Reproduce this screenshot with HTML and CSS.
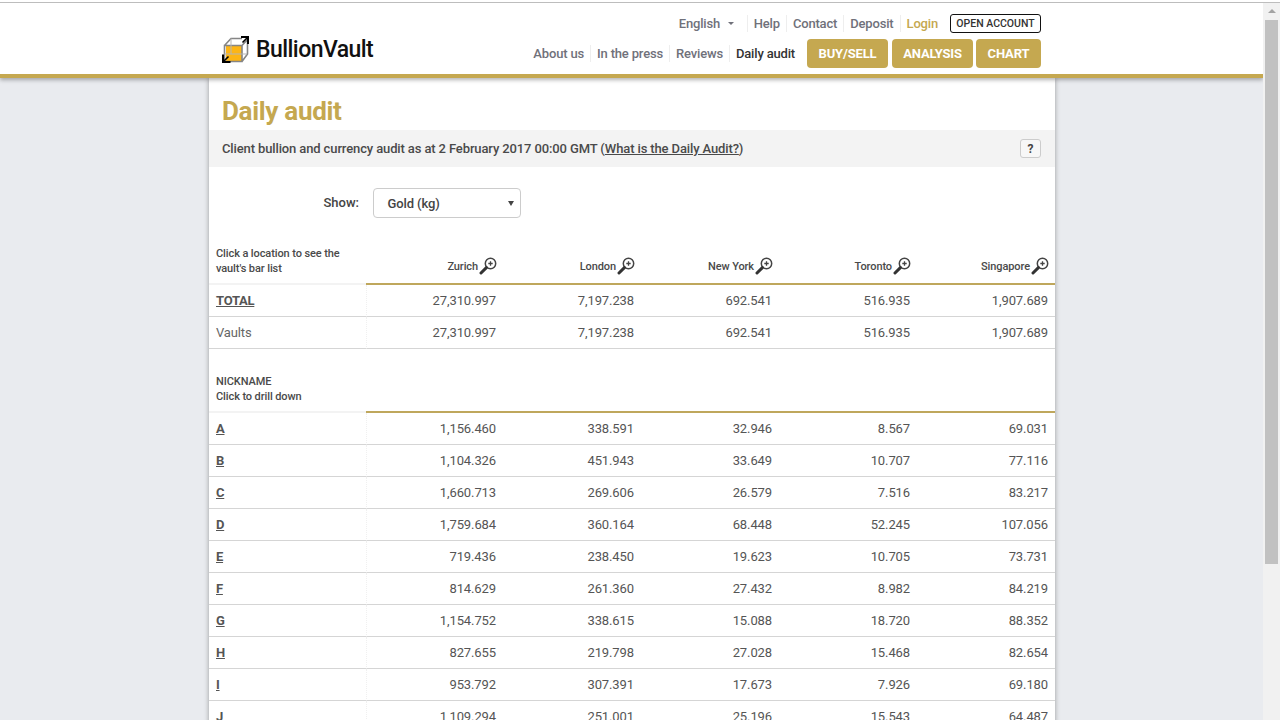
FILE: index.html
```html
<!DOCTYPE html>
<html lang="en">
<head>
<meta charset="utf-8">
<title>Daily audit - BullionVault</title>
<link rel="stylesheet" href="styles.css">
</head>
<body>
<div class="topline"></div>
<div class="viewport">
  <div class="page">
    <header class="site-header">
      <div class="header-inner">
        <a class="logo">
          <svg class="logo-icon" width="27" height="27" viewBox="0 0 27 27">
            <rect x="4" y="9" width="16" height="16" fill="#fdb515"/>
            <path d="M2.5 9.5 9 2.5H20M2.5 9.5H20V25.5H2.5ZM20 9.5l5.5-6V18L20 25.5" fill="none" stroke="#858585" stroke-width="1.6"/>
            <path d="M9 2.5V18H25" fill="none" stroke="#b5b5b5" stroke-width="1"/>
            <path d="M2.5 18 9 18" stroke="#b5b5b5" stroke-width="1"/>
            <path d="M19 1h7v7" fill="none" stroke="#000" stroke-width="2"/>
            <path d="M25.5 1.5l-5 5" stroke="#000" stroke-width="1.6"/>
            <path d="M1 18.5V26h7.5" fill="none" stroke="#000" stroke-width="2"/>
            <path d="M1.5 25.5l5-5" stroke="#000" stroke-width="1.6"/>
          </svg>
          <span class="logo-text">BullionVault</span>
        </a>
        <nav class="navs">
          <div class="nav-top">
            <a class="lang">English<span class="caret"></span></a>
            <a class="nlink">Help</a>
            <a class="nlink">Contact</a>
            <a class="nlink">Deposit</a>
            <a class="nlink login">Login</a>
            <a class="open">OPEN ACCOUNT</a>
          </div>
          <div class="nav-main">
            <a class="nlink first">About us</a>
            <a class="nlink">In the press</a>
            <a class="nlink">Reviews</a>
            <a class="nlink current">Daily audit</a>
            <a class="pill buy">BUY/SELL</a>
            <a class="pill analysis">ANALYSIS</a>
            <a class="pill chart">CHART</a>
          </div>
        </nav>
      </div>
    </header>
    <main class="content">
      <h1 class="title">Daily audit</h1>
      <div class="band">
        <p>Client bullion and currency audit as at 2 February 2017 00:00 GMT (<a>What is the Daily Audit?</a>)</p>
        <button class="help" type="button">?</button>
      </div>
      <div class="show">
        <span class="show-label">Show:</span>
        <div class="select">Gold (kg)<span class="select-arrow"></span></div>
      </div>
      <table class="audit">
        <colgroup><col class="c0"><col class="c1"><col class="c1"><col class="c1"><col class="c1"><col class="c5"></colgroup>
        <tr class="head head-a">
          <th class="lead">Click a location to see the<br>vault's bar list</th>
          <th><a class="loc">Zurich<svg class="mag" viewBox="0 0 18 18"><use href="#mag"/></svg></a></th>
          <th><a class="loc">London<svg class="mag" viewBox="0 0 18 18"><use href="#mag"/></svg></a></th>
          <th><a class="loc">New York<svg class="mag" viewBox="0 0 18 18"><use href="#mag"/></svg></a></th>
          <th><a class="loc">Toronto<svg class="mag" viewBox="0 0 18 18"><use href="#mag"/></svg></a></th>
          <th><a class="loc">Singapore<svg class="mag" viewBox="0 0 18 18"><use href="#mag"/></svg></a></th>
        </tr>
        <tr><td class="name"><a>TOTAL</a></td><td>27,310.997</td><td>7,197.238</td><td>692.541</td><td>516.935</td><td>1,907.689</td></tr>
        <tr><td class="plain">Vaults</td><td>27,310.997</td><td>7,197.238</td><td>692.541</td><td>516.935</td><td>1,907.689</td></tr>
        <tr class="head head-b">
          <th class="lead">NICKNAME<br>Click to drill down</th><th></th><th></th><th></th><th></th><th></th>
        </tr>
        <tr><td class="name"><a>A</a></td><td>1,156.460</td><td>338.591</td><td>32.946</td><td>8.567</td><td>69.031</td></tr>
        <tr><td class="name"><a>B</a></td><td>1,104.326</td><td>451.943</td><td>33.649</td><td>10.707</td><td>77.116</td></tr>
        <tr><td class="name"><a>C</a></td><td>1,660.713</td><td>269.606</td><td>26.579</td><td>7.516</td><td>83.217</td></tr>
        <tr><td class="name"><a>D</a></td><td>1,759.684</td><td>360.164</td><td>68.448</td><td>52.245</td><td>107.056</td></tr>
        <tr><td class="name"><a>E</a></td><td>719.436</td><td>238.450</td><td>19.623</td><td>10.705</td><td>73.731</td></tr>
        <tr><td class="name"><a>F</a></td><td>814.629</td><td>261.360</td><td>27.432</td><td>8.982</td><td>84.219</td></tr>
        <tr><td class="name"><a>G</a></td><td>1,154.752</td><td>338.615</td><td>15.088</td><td>18.720</td><td>88.352</td></tr>
        <tr><td class="name"><a>H</a></td><td>827.655</td><td>219.798</td><td>27.028</td><td>15.468</td><td>82.654</td></tr>
        <tr><td class="name"><a>I</a></td><td>953.792</td><td>307.391</td><td>17.673</td><td>7.926</td><td>69.180</td></tr>
        <tr><td class="name"><a>J</a></td><td>1,109.294</td><td>251.001</td><td>25.196</td><td>15.543</td><td>64.487</td></tr>
      </table>
    </main>
  </div>
  <div class="scrollbar">
    <div class="sb-up"></div>
    <div class="sb-thumb"></div>
  </div>
</div>
<svg class="defs" width="0" height="0">
  <symbol id="mag" viewBox="0 0 18 18">
    <circle cx="11.5" cy="6.5" r="5.2" fill="#fff" stroke="#444" stroke-width="1.5"/>
    <path d="M9.3 6.5h4.4M11.5 4.3v4.4" stroke="#444" stroke-width="1.3"/>
    <path d="M7.4 10.6 2 16" stroke="#333" stroke-width="3" stroke-linecap="round"/>
  </symbol>
</svg>
</body>
</html>
```
FILE: styles.css
```css
* { box-sizing: border-box; }
html, body { margin: 0; height: 720px; overflow: hidden; }
body { font-family: Roboto, "Liberation Sans", sans-serif; color: #444; background: #fff; padding-top: 2px; }
a { color: inherit; }
.topline { height: 1px; background: #bdbdbd; }
.viewport { display: flex; height: 717px; overflow: hidden; }
.page { flex: 1; min-width: 0; background: #e9ebef; overflow: hidden; }
.site-header { position: relative; z-index: 2; height: 75px; background: #fff; border-bottom: 4px solid #c5a850; box-shadow: 0 2px 4px rgba(0,0,0,.3); }
.header-inner { width: 819px; margin-left: 222px; height: 71px; display: flex; justify-content: space-between; }
.logo { display: flex; align-items: center; gap: 7px; padding-top: 22px; height: 71px; }
.logo-icon { display: block; flex: none; }
.logo-text { font-size: 23px; font-weight: 500; color: #111; letter-spacing: -.55px; }
.navs { display: flex; flex-direction: column; align-items: flex-end; padding-top: 11px; }
.nav-top, .nav-main { display: flex; align-items: center; font-size: 13px; font-weight: 500; color: #70717a; letter-spacing: -.17px; }
.nav-top { height: 19px; }
.nav-main { height: 29px; margin-top: 6px; }
.nlink { padding: 0 6px; border-left: 1px solid #eee; line-height: 17px; white-space: nowrap; }
.nlink.first { border-left: 0; }
.current { color: #333; margin-right: 6px; }
.login { color: #c5a850; margin-right: 6px; }
.lang { display: flex; align-items: center; width: 68px; white-space: nowrap; }
.caret { margin-left: 8px; border: 3px solid transparent; border-top-color: #70717a; border-bottom: 0; }
.open { width: 91px; height: 19px; border: 1px solid #111; border-radius: 3px; font-size: 10.5px; color: #333; letter-spacing: 0; display: flex; align-items: center; justify-content: center; }
.pill { height: 29px; border-radius: 4px; background: #c5a850; color: #fff; font-weight: 700; letter-spacing: -.15px; display: flex; align-items: center; justify-content: center; }
.buy { width: 81px; }
.analysis { width: 81px; margin-left: 4px; }
.chart { width: 65px; margin-left: 3px; }
.content { width: 846px; margin-left: 209px; background: #fff; box-shadow: 0 0 5px rgba(0,0,0,.35); height: 660px; overflow: hidden; }
.title { margin: 0; height: 52px; padding: 17px 0 0 13px; font-size: 26px; line-height: 33px; font-weight: 700; color: #c5a850; letter-spacing: -.3px; }
.band { height: 37px; background: #f3f3f3; display: flex; align-items: center; justify-content: space-between; padding: 0 14px 0 13px; }
.band p { margin: 0; font-size: 13px; font-weight: 500; color: #4a4a4a; letter-spacing: -.125px; }
.band a { text-decoration: underline; }
.help { width: 21px; height: 19px; padding: 0; border: 1px solid #ccc; border-radius: 3px; background: #f7f7f7; font: 700 12px Roboto, sans-serif; color: #444; }
.show { height: 73px; display: flex; align-items: flex-start; padding-top: 21px; }
.show-label { width: 150px; text-align: right; font-size: 13px; font-weight: 500; line-height: 30px; }
.select { width: 148px; height: 30px; margin-left: 14px; padding-left: 13.5px; border: 1px solid #ccc; border-radius: 4px; font-size: 13px; font-weight: 500; line-height: 29px; letter-spacing: -.1px; position: relative; }
.select-arrow { position: absolute; right: 6px; top: 12px; border: 3px solid transparent; border-top: 5px solid #444; border-bottom: 0; }
.audit { width: 846px; table-layout: fixed; border-collapse: separate; border-spacing: 0; font-size: 13px; }
.c0 { width: 157px; }
.c1 { width: 138px; }
.c5 { width: 137px; }
td, th { padding: 0 8px 0 0; text-align: right; }
td:last-child, th:last-child { padding-right: 7px; }
td:first-child, th:first-child { padding-left: 7px; text-align: left; }
td:nth-child(2) { border-left: 1px dotted #f0f0f0; }
td { height: 32px; border-bottom: 1px solid #d5d5d5; color: #555; white-space: nowrap; letter-spacing: -.1px; }
.head th { vertical-align: bottom; border-bottom: 2px solid #bfa75c; font-size: 11px; font-weight: 500; line-height: 15px; color: #4a4a4a; letter-spacing: -.1px; }
.head th.lead { border-bottom-color: #f3f3f3; }
.head-a th { height: 45px; padding-bottom: 8px; }
.head-a th.lead { padding-bottom: 7px; }
.head-b th { height: 64px; padding-bottom: 7px; }
.loc { display: inline-flex; align-items: center; justify-content: flex-end; white-space: nowrap; }
.mag { width: 18px; height: 18px; margin-left: 1px; flex: none; margin-right: -1px; }
.name { font-weight: 700; color: #555; letter-spacing: -.25px; }
.name a { text-decoration: underline; }
.plain { color: #666; letter-spacing: -.15px; }
.scrollbar { width: 17px; flex: none; background: #f1f1f1; padding: 0 2px; }
.sb-up { height: 17px; position: relative; }
.sb-up::after { content: ""; position: absolute; left: 3px; top: 6px; border: 4px solid transparent; border-top: 0; border-bottom-color: #a3a3a3; }
.sb-thumb { height: 544px; background: #c1c1c1; }
.defs { position: absolute; }
```
